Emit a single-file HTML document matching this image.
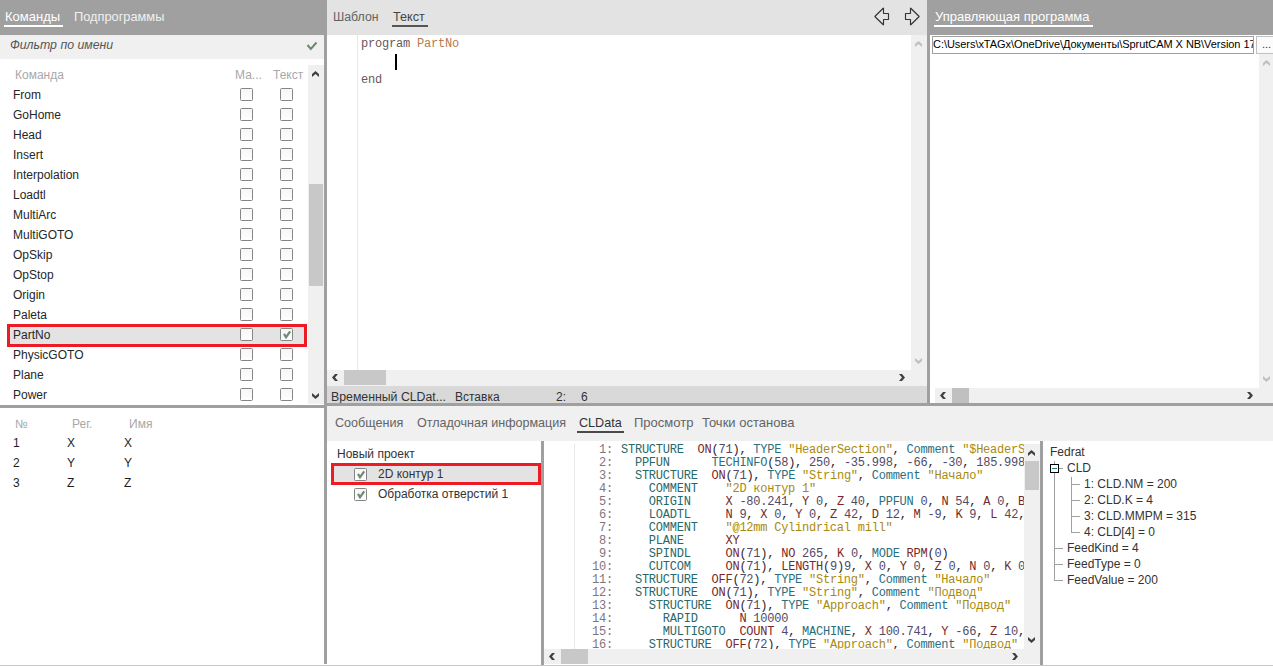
<!DOCTYPE html>
<html><head><meta charset="utf-8"><style>
html,body{margin:0;padding:0;}
body{width:1273px;height:666px;overflow:hidden;position:relative;background:#ffffff;font-family:"Liberation Sans",sans-serif;}
body>div,body>span{position:absolute;}
.s{position:absolute;white-space:pre;font-family:"Liberation Sans",sans-serif;}
.m{position:absolute;white-space:pre;font-family:"Liberation Mono",monospace;}
.cb{position:absolute;width:13px;height:13px;box-sizing:border-box;border:1px solid #858585;border-radius:1.5px;background:linear-gradient(#f6f6f6,#fdfdfd);}
svg{position:absolute;overflow:visible;}
</style></head><body>
<div style="left:0px;top:0px;width:327px;height:35px;background:#a0a0a0;"></div>
<span class="s" style="left:5px;top:10px;font-size:13px;line-height:13px;color:#ffffff;">Команды</span>
<div style="left:4px;top:25px;width:59px;height:2px;background:#ffffff;"></div>
<span class="s" style="left:74px;top:11px;font-size:12.8px;line-height:12.8px;color:#f0f0f0;">Подпрограммы</span>
<div style="left:0px;top:35px;width:324px;height:24px;background:#f0f0f0;"></div>
<span class="s" style="left:10px;top:39px;font-size:12.3px;line-height:12.3px;color:#555555;font-style:italic">Фильтр по имени</span>
<svg style="position:absolute;left:305px;top:40px" width="14" height="12"><polyline points="2.5,5 5.8,9 11.5,2.5" fill="none" stroke="#6a8a6a" stroke-width="2"/></svg>
<div style="left:0px;top:59px;width:324px;height:346px;background:#ffffff;"></div>
<span class="s" style="left:15px;top:69px;font-size:12px;line-height:12px;color:#a8a8a8;">Команда</span>
<span class="s" style="left:235px;top:69px;font-size:12px;line-height:12px;color:#a8a8a8;">Ма...</span>
<span class="s" style="left:273px;top:69px;font-size:12px;line-height:12px;color:#a8a8a8;">Текст</span>
<span class="s" style="left:13px;top:89px;font-size:12px;line-height:12px;color:#262626;">From</span>
<div class="cb" style="left:240px;top:88px"></div>
<div class="cb" style="left:280px;top:88px"></div>
<span class="s" style="left:13px;top:109px;font-size:12px;line-height:12px;color:#262626;">GoHome</span>
<div class="cb" style="left:240px;top:108px"></div>
<div class="cb" style="left:280px;top:108px"></div>
<span class="s" style="left:13px;top:129px;font-size:12px;line-height:12px;color:#262626;">Head</span>
<div class="cb" style="left:240px;top:128px"></div>
<div class="cb" style="left:280px;top:128px"></div>
<span class="s" style="left:13px;top:149px;font-size:12px;line-height:12px;color:#262626;">Insert</span>
<div class="cb" style="left:240px;top:148px"></div>
<div class="cb" style="left:280px;top:148px"></div>
<span class="s" style="left:13px;top:169px;font-size:12px;line-height:12px;color:#262626;">Interpolation</span>
<div class="cb" style="left:240px;top:168px"></div>
<div class="cb" style="left:280px;top:168px"></div>
<span class="s" style="left:13px;top:189px;font-size:12px;line-height:12px;color:#262626;">Loadtl</span>
<div class="cb" style="left:240px;top:188px"></div>
<div class="cb" style="left:280px;top:188px"></div>
<span class="s" style="left:13px;top:209px;font-size:12px;line-height:12px;color:#262626;">MultiArc</span>
<div class="cb" style="left:240px;top:208px"></div>
<div class="cb" style="left:280px;top:208px"></div>
<span class="s" style="left:13px;top:229px;font-size:12px;line-height:12px;color:#262626;">MultiGOTO</span>
<div class="cb" style="left:240px;top:228px"></div>
<div class="cb" style="left:280px;top:228px"></div>
<span class="s" style="left:13px;top:249px;font-size:12px;line-height:12px;color:#262626;">OpSkip</span>
<div class="cb" style="left:240px;top:248px"></div>
<div class="cb" style="left:280px;top:248px"></div>
<span class="s" style="left:13px;top:269px;font-size:12px;line-height:12px;color:#262626;">OpStop</span>
<div class="cb" style="left:240px;top:268px"></div>
<div class="cb" style="left:280px;top:268px"></div>
<span class="s" style="left:13px;top:289px;font-size:12px;line-height:12px;color:#262626;">Origin</span>
<div class="cb" style="left:240px;top:288px"></div>
<div class="cb" style="left:280px;top:288px"></div>
<span class="s" style="left:13px;top:309px;font-size:12px;line-height:12px;color:#262626;">Paleta</span>
<div class="cb" style="left:240px;top:308px"></div>
<div class="cb" style="left:280px;top:308px"></div>
<div style="left:7px;top:324px;width:300px;height:23px;background:#e3e3e3;box-sizing:border-box;border:3px solid #ed1c24"></div>
<span class="s" style="left:13px;top:329px;font-size:12px;line-height:12px;color:#262626;">PartNo</span>
<div class="cb" style="left:240px;top:328px"></div>
<div class="cb" style="left:280px;top:328px"><svg width="13" height="13" style="position:absolute;left:0;top:0"><polyline points="3,4.9 5,8.2 9.2,2.3" fill="none" stroke="#6f8b70" stroke-width="2.2"/></svg></div>
<span class="s" style="left:13px;top:349px;font-size:12px;line-height:12px;color:#262626;">PhysicGOTO</span>
<div class="cb" style="left:240px;top:348px"></div>
<div class="cb" style="left:280px;top:348px"></div>
<span class="s" style="left:13px;top:369px;font-size:12px;line-height:12px;color:#262626;">Plane</span>
<div class="cb" style="left:240px;top:368px"></div>
<div class="cb" style="left:280px;top:368px"></div>
<span class="s" style="left:13px;top:389px;font-size:12px;line-height:12px;color:#262626;">Power</span>
<div class="cb" style="left:240px;top:388px"></div>
<div class="cb" style="left:280px;top:388px"></div>
<div style="left:308px;top:65px;width:16px;height:339px;background:#f0f0f0;"></div>
<div style="left:309px;top:184px;width:14px;height:102px;background:#c8c8c8;"></div>
<svg style="position:absolute;left:312px;top:71px" width="7" height="6"><polygon points="0.00,6.00 0.00,3.00 3.50,0.00 7.00,3.00 7.00,6.00 3.50,3.00" fill="#404040"/></svg>
<svg style="position:absolute;left:312px;top:393px" width="7" height="6"><polygon points="0.00,0.00 0.00,3.00 3.50,6.00 7.00,3.00 7.00,0.00 3.50,3.00" fill="#404040"/></svg>
<div style="left:324px;top:35px;width:3px;height:629px;background:#a0a0a0;"></div>
<div style="left:0px;top:405px;width:324px;height:3px;background:#a0a0a0;"></div>
<span class="s" style="left:15px;top:418px;font-size:12px;line-height:12px;color:#a8a8a8;">№</span>
<span class="s" style="left:72px;top:418px;font-size:12px;line-height:12px;color:#a8a8a8;">Рег.</span>
<span class="s" style="left:129px;top:418px;font-size:12px;line-height:12px;color:#a8a8a8;">Имя</span>
<span class="s" style="left:13px;top:437px;font-size:12px;line-height:12px;color:#1e1e1e;">1</span>
<span class="s" style="left:67px;top:437px;font-size:12px;line-height:12px;color:#1e1e1e;">X</span>
<span class="s" style="left:124px;top:437px;font-size:12px;line-height:12px;color:#1e1e1e;">X</span>
<span class="s" style="left:13px;top:457px;font-size:12px;line-height:12px;color:#1e1e1e;">2</span>
<span class="s" style="left:67px;top:457px;font-size:12px;line-height:12px;color:#1e1e1e;">Y</span>
<span class="s" style="left:124px;top:457px;font-size:12px;line-height:12px;color:#1e1e1e;">Y</span>
<span class="s" style="left:13px;top:477px;font-size:12px;line-height:12px;color:#1e1e1e;">3</span>
<span class="s" style="left:67px;top:477px;font-size:12px;line-height:12px;color:#1e1e1e;">Z</span>
<span class="s" style="left:124px;top:477px;font-size:12px;line-height:12px;color:#1e1e1e;">Z</span>
<div style="left:327px;top:0px;width:600px;height:35px;background:#e3e3e3;"></div>
<span class="s" style="left:333px;top:11px;font-size:12.3px;line-height:12.3px;color:#646464;">Шаблон</span>
<span class="s" style="left:393px;top:11px;font-size:12.6px;line-height:12.6px;color:#444444;">Текст</span>
<div style="left:392px;top:25px;width:36px;height:2px;background:#555555;"></div>
<svg style="position:absolute;left:870px;top:4px" width="56" height="26"><path d="M4.8,12.5 L13.5,4 L13.5,9.5 L18.5,9.5 L18.5,15.5 L13.5,15.5 L13.5,21 Z" fill="none" stroke="#333" stroke-width="1.15" stroke-linejoin="bevel"/><path d="M49.2,12.5 L40.5,4 L40.5,9.5 L35.5,9.5 L35.5,15.5 L40.5,15.5 L40.5,21 Z" fill="none" stroke="#333" stroke-width="1.15" stroke-linejoin="bevel"/></svg>
<div style="left:327px;top:35px;width:584px;height:335px;background:#ffffff;"></div>
<div style="left:357px;top:35px;width:1px;height:335px;background:#e8e8e8;"></div>
<div class="m" style="left:361px;top:35px;font-size:12px;line-height:18px;letter-spacing:-0.2px;color:#6a5858"><span>program </span><span style="color:#b57a50">PartNo</span>

end</div>
<div style="left:395px;top:54px;width:2px;height:16px;background:#000000;"></div>
<div style="left:911px;top:35px;width:16px;height:351px;background:#f0f0f0;"></div>
<svg style="position:absolute;left:915px;top:41px" width="7" height="6"><polygon points="0.00,6.00 0.00,3.00 3.50,0.00 7.00,3.00 7.00,6.00 3.50,3.00" fill="#c0c0c0"/></svg>
<svg style="position:absolute;left:915px;top:358px" width="7" height="6"><polygon points="0.00,0.00 0.00,3.00 3.50,6.00 7.00,3.00 7.00,0.00 3.50,3.00" fill="#c0c0c0"/></svg>
<div style="left:327px;top:370px;width:584px;height:16px;background:#f0f0f0;"></div>
<div style="left:344px;top:370px;width:42px;height:15px;background:#c8c8c8;"></div>
<svg style="position:absolute;left:332px;top:374px" width="6" height="7"><polygon points="6.00,0.00 3.00,0.00 0.00,3.50 3.00,7.00 6.00,7.00 3.00,3.50" fill="#404040"/></svg>
<svg style="position:absolute;left:899px;top:374px" width="6" height="7"><polygon points="0.00,0.00 3.00,0.00 6.00,3.50 3.00,7.00 0.00,7.00 3.00,3.50" fill="#404040"/></svg>
<div style="left:327px;top:386px;width:600px;height:17px;background:#d9d9d9;"></div>
<span class="s" style="left:331px;top:391px;font-size:12.3px;line-height:12.3px;color:#333333;">Временный CLDat...</span>
<span class="s" style="left:455px;top:391px;font-size:12px;line-height:12px;color:#333333;">Вставка</span>
<span class="s" style="left:556px;top:391px;font-size:12px;line-height:12px;color:#333333;">2:</span>
<span class="s" style="left:581px;top:391px;font-size:12px;line-height:12px;color:#333333;">6</span>
<div style="left:327px;top:403px;width:946px;height:3px;background:#a0a0a0;"></div>
<div style="left:927px;top:0px;width:346px;height:35px;background:#a0a0a0;"></div>
<span class="s" style="left:935px;top:10px;font-size:13px;line-height:13px;color:#ffffff;">Управляющая программа</span>
<div style="left:934px;top:25px;width:159px;height:2px;background:#ffffff;"></div>
<div style="left:927px;top:35px;width:3px;height:368px;background:#a0a0a0;"></div>
<div style="left:930px;top:35px;width:343px;height:368px;background:#ffffff;"></div>
<div style="left:932px;top:36px;width:322px;height:18px;box-sizing:border-box;border:1px solid #a0a0a0;background:#fff;overflow:hidden"><span class="s" style="left:0px;top:2px;font-size:11px;line-height:11px;letter-spacing:-0.05px;color:#000">C:\Users\xTAGx\OneDrive\Документы\SprutCAM X NB\Version 17.0</span></div>
<div style="left:1256px;top:36px;width:22px;height:18px;box-sizing:border-box;border:1px solid #c0c0c0;background:#fbfbfb"><span class="s" style="left:5px;top:2px;font-size:11px;line-height:11px;color:#333">...</span></div>
<div style="left:1259px;top:54px;width:14px;height:334px;background:#f0f0f0;"></div>
<svg style="position:absolute;left:1263px;top:60px" width="7" height="6"><polygon points="0.00,6.00 0.00,3.00 3.50,0.00 7.00,3.00 7.00,6.00 3.50,3.00" fill="#c0c0c0"/></svg>
<svg style="position:absolute;left:1263px;top:376px" width="7" height="6"><polygon points="0.00,0.00 0.00,3.00 3.50,6.00 7.00,3.00 7.00,0.00 3.50,3.00" fill="#c0c0c0"/></svg>
<div style="left:935px;top:388px;width:338px;height:15px;background:#f0f0f0;"></div>
<div style="left:952px;top:388px;width:17px;height:15px;background:#c0c0c0;"></div>
<svg style="position:absolute;left:940px;top:392px" width="6" height="7"><polygon points="6.00,0.00 3.00,0.00 0.00,3.50 3.00,7.00 6.00,7.00 3.00,3.50" fill="#404040"/></svg>
<svg style="position:absolute;left:1247px;top:392px" width="6" height="7"><polygon points="0.00,0.00 3.00,0.00 6.00,3.50 3.00,7.00 0.00,7.00 3.00,3.50" fill="#404040"/></svg>
<div style="left:327px;top:406px;width:946px;height:35px;background:#f0f0f0;"></div>
<span class="s" style="left:335px;top:417px;font-size:12.6px;line-height:12.6px;color:#646464;">Сообщения</span>
<span class="s" style="left:417px;top:417px;font-size:12.55px;line-height:12.55px;color:#646464;">Отладочная информация</span>
<span class="s" style="left:579px;top:417px;font-size:12.6px;line-height:12.6px;color:#333333;">CLData</span>
<div style="left:577px;top:431px;width:47px;height:2px;background:#4a4a4a;"></div>
<span class="s" style="left:634px;top:416px;font-size:13px;line-height:13px;color:#646464;">Просмотр</span>
<span class="s" style="left:702px;top:416px;font-size:13px;line-height:13px;color:#646464;">Точки останова</span>
<div style="left:327px;top:441px;width:214px;height:225px;background:#ffffff;"></div>
<span class="s" style="left:337px;top:448px;font-size:12px;line-height:12px;color:#333333;">Новый проект</span>
<div style="left:331px;top:463px;width:210px;height:22px;background:#e3e3e3;box-sizing:border-box;border:3px solid #ed1c24"></div>
<div class="cb" style="left:354px;top:468px"><svg width="13" height="13" style="position:absolute;left:0;top:0"><polyline points="3,4.9 5,8.2 9.2,2.3" fill="none" stroke="#6f8b70" stroke-width="2.2"/></svg></div>
<span class="s" style="left:378px;top:468px;font-size:12px;line-height:12px;color:#333333;">2D контур 1</span>
<div class="cb" style="left:354px;top:488px"><svg width="13" height="13" style="position:absolute;left:0;top:0"><polyline points="3,4.9 5,8.2 9.2,2.3" fill="none" stroke="#6f8b70" stroke-width="2.2"/></svg></div>
<span class="s" style="left:378px;top:488px;font-size:12px;line-height:12px;color:#333333;">Обработка отверстий 1</span>
<div style="left:541px;top:441px;width:3px;height:225px;background:#a0a0a0;"></div>
<div style="left:544px;top:441px;width:496px;height:225px;background:#ffffff;"></div>
<div style="left:574px;top:444px;width:1px;height:205px;background:#e8e8e8;"></div>
<div style="left:544px;top:441px;width:480px;height:208px;overflow:hidden"><div class="m" style="left:48px;top:3px;font-size:12px;line-height:13px;letter-spacing:-0.24px;color:#7f757f"> 1:
 2:
 3:
 4:
 5:
 6:
 7:
 8:
 9:
10:
11:
12:
13:
14:
15:
16:
</div><div class="m" style="left:77px;top:3px;font-size:12px;line-height:13px;letter-spacing:-0.24px;color:#1e1e30"><span style="color:#296868">STRUCTURE</span>  <span style="color:#782828">ON</span><span style="color:#1e1e30">(</span><span style="color:#4f4a68">71</span><span style="color:#1e1e30">)</span><span style="color:#1e1e30">,</span> <span style="color:#2a6e7e">TYPE</span> <span style="color:#a88a10">"HeaderSection"</span><span style="color:#1e1e30">,</span> <span style="color:#2a6e7e">Comment</span> <span style="color:#a88a10">"$HeaderSection"</span>
  <span style="color:#296868">PPFUN</span>      <span style="color:#2a6e7e">TECHINFO</span><span style="color:#1e1e30">(</span><span style="color:#4f4a68">58</span><span style="color:#1e1e30">)</span><span style="color:#1e1e30">,</span> <span style="color:#4f4a68">250</span><span style="color:#1e1e30">,</span> <span style="color:#4f4a68">-35.998</span><span style="color:#1e1e30">,</span> <span style="color:#4f4a68">-66</span><span style="color:#1e1e30">,</span> <span style="color:#4f4a68">-30</span><span style="color:#1e1e30">,</span> <span style="color:#4f4a68">185.998</span><span style="color:#1e1e30">,</span> <span style="color:#4f4a68">66</span><span style="color:#1e1e30">,</span> <span style="color:#4f4a68">30</span>
  <span style="color:#296868">STRUCTURE</span>  <span style="color:#782828">ON</span><span style="color:#1e1e30">(</span><span style="color:#4f4a68">71</span><span style="color:#1e1e30">)</span><span style="color:#1e1e30">,</span> <span style="color:#2a6e7e">TYPE</span> <span style="color:#a88a10">"String"</span><span style="color:#1e1e30">,</span> <span style="color:#2a6e7e">Comment</span> <span style="color:#a88a10">"Начало"</span>
    <span style="color:#296868">COMMENT</span>    <span style="color:#a88a10">"2D контур 1"</span>
    <span style="color:#296868">ORIGIN</span>     <span style="color:#782828">X</span> <span style="color:#4f4a68">-80.241</span><span style="color:#1e1e30">,</span> <span style="color:#782828">Y</span> <span style="color:#4f4a68">0</span><span style="color:#1e1e30">,</span> <span style="color:#782828">Z</span> <span style="color:#4f4a68">40</span><span style="color:#1e1e30">,</span> <span style="color:#2a6e7e">PPFUN</span> <span style="color:#4f4a68">0</span><span style="color:#1e1e30">,</span> <span style="color:#782828">N</span> <span style="color:#4f4a68">54</span><span style="color:#1e1e30">,</span> <span style="color:#782828">A</span> <span style="color:#4f4a68">0</span><span style="color:#1e1e30">,</span> <span style="color:#782828">B</span> <span style="color:#4f4a68">0</span>
    <span style="color:#296868">LOADTL</span>     <span style="color:#782828">N</span> <span style="color:#4f4a68">9</span><span style="color:#1e1e30">,</span> <span style="color:#782828">X</span> <span style="color:#4f4a68">0</span><span style="color:#1e1e30">,</span> <span style="color:#782828">Y</span> <span style="color:#4f4a68">0</span><span style="color:#1e1e30">,</span> <span style="color:#782828">Z</span> <span style="color:#4f4a68">42</span><span style="color:#1e1e30">,</span> <span style="color:#782828">D</span> <span style="color:#4f4a68">12</span><span style="color:#1e1e30">,</span> <span style="color:#782828">M</span> <span style="color:#4f4a68">-9</span><span style="color:#1e1e30">,</span> <span style="color:#782828">K</span> <span style="color:#4f4a68">9</span><span style="color:#1e1e30">,</span> <span style="color:#782828">L</span> <span style="color:#4f4a68">42</span><span style="color:#1e1e30">,</span> <span style="color:#782828">P</span> <span style="color:#4f4a68">0</span>
    <span style="color:#296868">COMMENT</span>    <span style="color:#a88a10">"@12mm Cylindrical mill"</span>
    <span style="color:#296868">PLANE</span>      <span style="color:#782828">XY</span>
    <span style="color:#296868">SPINDL</span>     <span style="color:#782828">ON</span><span style="color:#1e1e30">(</span><span style="color:#4f4a68">71</span><span style="color:#1e1e30">)</span><span style="color:#1e1e30">,</span> <span style="color:#782828">NO</span> <span style="color:#4f4a68">265</span><span style="color:#1e1e30">,</span> <span style="color:#782828">K</span> <span style="color:#4f4a68">0</span><span style="color:#1e1e30">,</span> <span style="color:#2a6e7e">MODE</span> <span style="color:#782828">RPM</span><span style="color:#1e1e30">(</span><span style="color:#4f4a68">0</span><span style="color:#1e1e30">)</span>
    <span style="color:#296868">CUTCOM</span>     <span style="color:#782828">ON</span><span style="color:#1e1e30">(</span><span style="color:#4f4a68">71</span><span style="color:#1e1e30">)</span><span style="color:#1e1e30">,</span> <span style="color:#782828">LENGTH</span><span style="color:#1e1e30">(</span><span style="color:#4f4a68">9</span><span style="color:#1e1e30">)</span><span style="color:#4f4a68">9</span><span style="color:#1e1e30">,</span> <span style="color:#782828">X</span> <span style="color:#4f4a68">0</span><span style="color:#1e1e30">,</span> <span style="color:#782828">Y</span> <span style="color:#4f4a68">0</span><span style="color:#1e1e30">,</span> <span style="color:#782828">Z</span> <span style="color:#4f4a68">0</span><span style="color:#1e1e30">,</span> <span style="color:#782828">N</span> <span style="color:#4f4a68">0</span><span style="color:#1e1e30">,</span> <span style="color:#782828">K</span> <span style="color:#4f4a68">0</span><span style="color:#1e1e30">,</span> <span style="color:#782828">L</span> <span style="color:#4f4a68">0</span>
  <span style="color:#296868">STRUCTURE</span>  <span style="color:#782828">OFF</span><span style="color:#1e1e30">(</span><span style="color:#4f4a68">72</span><span style="color:#1e1e30">)</span><span style="color:#1e1e30">,</span> <span style="color:#2a6e7e">TYPE</span> <span style="color:#a88a10">"String"</span><span style="color:#1e1e30">,</span> <span style="color:#2a6e7e">Comment</span> <span style="color:#a88a10">"Начало"</span>
  <span style="color:#296868">STRUCTURE</span>  <span style="color:#782828">ON</span><span style="color:#1e1e30">(</span><span style="color:#4f4a68">71</span><span style="color:#1e1e30">)</span><span style="color:#1e1e30">,</span> <span style="color:#2a6e7e">TYPE</span> <span style="color:#a88a10">"String"</span><span style="color:#1e1e30">,</span> <span style="color:#2a6e7e">Comment</span> <span style="color:#a88a10">"Подвод"</span>
    <span style="color:#296868">STRUCTURE</span>  <span style="color:#782828">ON</span><span style="color:#1e1e30">(</span><span style="color:#4f4a68">71</span><span style="color:#1e1e30">)</span><span style="color:#1e1e30">,</span> <span style="color:#2a6e7e">TYPE</span> <span style="color:#a88a10">"Approach"</span><span style="color:#1e1e30">,</span> <span style="color:#2a6e7e">Comment</span> <span style="color:#a88a10">"Подвод"</span>
      <span style="color:#296868">RAPID</span>      <span style="color:#782828">N</span> <span style="color:#4f4a68">10000</span>
      <span style="color:#296868">MULTIGOTO</span>  <span style="color:#782828">COUNT</span> <span style="color:#4f4a68">4</span><span style="color:#1e1e30">,</span> <span style="color:#2a6e7e">MACHINE</span><span style="color:#1e1e30">,</span> <span style="color:#782828">X</span> <span style="color:#4f4a68">100.741</span><span style="color:#1e1e30">,</span> <span style="color:#782828">Y</span> <span style="color:#4f4a68">-66</span><span style="color:#1e1e30">,</span> <span style="color:#782828">Z</span> <span style="color:#4f4a68">10</span><span style="color:#1e1e30">,</span> <span style="color:#782828">A</span> <span style="color:#4f4a68">0</span>
    <span style="color:#296868">STRUCTURE</span>  <span style="color:#782828">OFF</span><span style="color:#1e1e30">(</span><span style="color:#4f4a68">72</span><span style="color:#1e1e30">)</span><span style="color:#1e1e30">,</span> <span style="color:#2a6e7e">TYPE</span> <span style="color:#a88a10">"Approach"</span><span style="color:#1e1e30">,</span> <span style="color:#2a6e7e">Comment</span> <span style="color:#a88a10">"Подвод"</span>
</div></div>
<div style="left:1024px;top:444px;width:16px;height:205px;background:#f0f0f0;"></div>
<div style="left:1025px;top:461px;width:14px;height:29px;background:#c8c8c8;"></div>
<svg style="position:absolute;left:1028px;top:450px" width="7" height="6"><polygon points="0.00,6.00 0.00,3.00 3.50,0.00 7.00,3.00 7.00,6.00 3.50,3.00" fill="#404040"/></svg>
<svg style="position:absolute;left:1028px;top:637px" width="7" height="6"><polygon points="0.00,0.00 0.00,3.00 3.50,6.00 7.00,3.00 7.00,0.00 3.50,3.00" fill="#404040"/></svg>
<div style="left:544px;top:649px;width:496px;height:15px;background:#f0f0f0;"></div>
<div style="left:561px;top:649px;width:27px;height:15px;background:#c8c8c8;"></div>
<svg style="position:absolute;left:549px;top:653px" width="6" height="7"><polygon points="6.00,0.00 3.00,0.00 0.00,3.50 3.00,7.00 6.00,7.00 3.00,3.50" fill="#404040"/></svg>
<svg style="position:absolute;left:1012px;top:653px" width="6" height="7"><polygon points="0.00,0.00 3.00,0.00 6.00,3.50 3.00,7.00 0.00,7.00 3.00,3.50" fill="#404040"/></svg>
<div style="left:1040px;top:441px;width:3px;height:225px;background:#a0a0a0;"></div>
<div style="left:1043px;top:441px;width:230px;height:225px;background:#ffffff;"></div>
<span class="s" style="left:1050px;top:446px;font-size:12px;line-height:12px;color:#333333;">Fedrat</span>
<div style="left:1054px;top:461px;width:1px;height:120px;background:#a0a0a0;"></div>
<div style="left:1050px;top:464px;width:9px;height:9px;box-sizing:border-box;border:1px solid #000;background:#fff"></div>
<div style="left:1052px;top:468px;width:5px;height:1px;background:#1a8080;"></div>
<div style="left:1059px;top:468px;width:4px;height:1px;background:#a0a0a0;"></div>
<span class="s" style="left:1067px;top:462px;font-size:12px;line-height:12px;color:#333333;">CLD</span>
<div style="left:1071px;top:477px;width:1px;height:56px;background:#a0a0a0;"></div>
<div style="left:1072px;top:484px;width:8px;height:1px;background:#a0a0a0;"></div>
<span class="s" style="left:1084px;top:478px;font-size:12px;line-height:12px;color:#333333;">1: CLD.NM = 200</span>
<div style="left:1072px;top:500px;width:8px;height:1px;background:#a0a0a0;"></div>
<span class="s" style="left:1084px;top:494px;font-size:12px;line-height:12px;color:#333333;">2: CLD.K = 4</span>
<div style="left:1072px;top:516px;width:8px;height:1px;background:#a0a0a0;"></div>
<span class="s" style="left:1084px;top:510px;font-size:12px;line-height:12px;color:#333333;">3: CLD.MMPM = 315</span>
<div style="left:1072px;top:532px;width:8px;height:1px;background:#a0a0a0;"></div>
<span class="s" style="left:1084px;top:526px;font-size:12px;line-height:12px;color:#333333;">4: CLD[4] = 0</span>
<div style="left:1055px;top:548px;width:8px;height:1px;background:#a0a0a0;"></div>
<span class="s" style="left:1067px;top:542px;font-size:12px;line-height:12px;color:#333333;">FeedKind = 4</span>
<div style="left:1055px;top:564px;width:8px;height:1px;background:#a0a0a0;"></div>
<span class="s" style="left:1067px;top:558px;font-size:12px;line-height:12px;color:#333333;">FeedType = 0</span>
<div style="left:1055px;top:580px;width:8px;height:1px;background:#a0a0a0;"></div>
<span class="s" style="left:1067px;top:574px;font-size:12px;line-height:12px;color:#333333;">FeedValue = 200</span>
<div style="left:0px;top:665px;width:1273px;height:1px;background:#c8c8c8;"></div>
</body></html>
